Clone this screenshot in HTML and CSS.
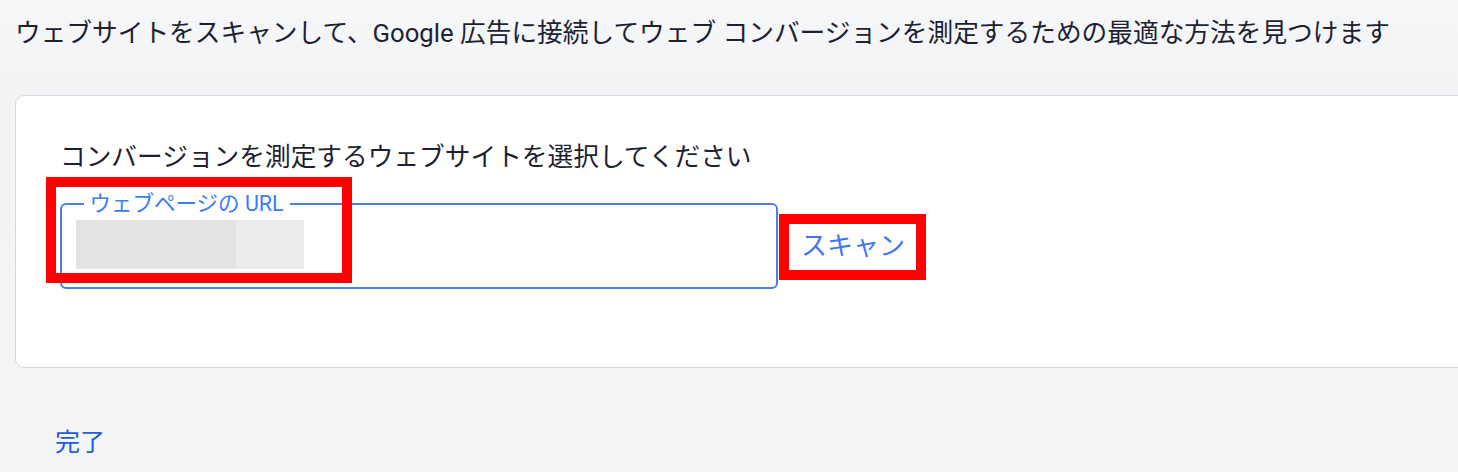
FILE: index.html
```html
<!DOCTYPE html>
<html lang="ja">
<head>
<meta charset="utf-8">
<link rel="stylesheet" href="styles.css">
</head>
<body>
<div class="page">
  <p class="intro">ウェブサイトをスキャンして、Google 広告に接続してウェブ コンバージョンを測定するための最適な方法を見つけます</p>
  <section class="card">
    <h2 class="card-title">コンバージョンを測定するウェブサイトを選択してください</h2>
    <div class="row">
      <fieldset class="field">
        <legend class="field-label">ウェブページの URL</legend>
        <div class="redacted">
          <span class="redact-a"></span><span class="redact-b"></span>
        </div>
      </fieldset>
      <button class="scan">スキャン</button>
    </div>
    <span class="mark mark-field"></span>
    <span class="mark mark-scan"></span>
  </section>
  <a class="done">完了</a>
</div>
</body>
</html>
```

FILE: styles.css
```css
html, body {
  margin: 0;
  padding: 0;
}
body {
  width: 1458px;
  height: 472px;
  overflow: hidden;
  background: linear-gradient(180deg, #f6f7f8 0%, #f1f3f5 20%, #f3f5f7 100%);
  font-family: Roboto, "Noto Sans CJK JP", sans-serif;
  color: #1f1f2e;
}
.page {
  padding: 15px 0 0 15px;
}
.intro {
  margin: 0;
  font-size: 25.7px;
  line-height: 36px;
  white-space: nowrap;
  color: #1f1f33;
}
.card {
  position: relative;
  margin: 44px 0 0 0;
  width: 1480px;
  box-sizing: border-box;
  background: #fff;
  border: 1px solid #d6d8dc;
  border-radius: 9px;
  padding: 45px 0 78px 44px;
}
.card-title {
  margin: 0;
  font-weight: 400;
  font-size: 25.7px;
  line-height: 32px;
  color: #1f1f33;
}
.row {
  display: flex;
  align-items: flex-start;
  margin-top: 19px;
}
.field {
  box-sizing: border-box;
  width: 718px;
  height: 97px;
  margin: 0;
  padding: 0 13.5px 0 13.5px;
  border: 2px solid #4f7fe6;
  border-radius: 6px;
}
.field-label {
  padding: 0 6px;
  margin-left: 8px;
  font-size: 21.5px;
  line-height: 24px;
  color: #3b7cf4;
}
.redacted {
  display: flex;
  height: 49px;
  margin-top: 4px;
}
.redact-a {
  width: 160px;
  background: #e2e3e3;
}
.redact-b {
  width: 68px;
  background: #ececec;
}
.scan {
  margin: 38px 0 0 23px;
  padding: 0;
  border: none;
  background: none;
  font-family: Roboto, "Noto Sans CJK JP", sans-serif;
  font-size: 26px;
  line-height: 32px;
  color: #3d76ee;
}
.mark {
  position: absolute;
  box-sizing: border-box;
  border: 10px solid #ff0000;
}
.mark-field {
  left: 30px;
  top: 81px;
  width: 306px;
  height: 106px;
}
.mark-scan {
  left: 763px;
  top: 118px;
  width: 147px;
  height: 66px;
}
.done {
  display: block;
  margin: 59px 0 0 40px;
  font-size: 25px;
  line-height: 32px;
  color: #1d5ce0;
}
```
